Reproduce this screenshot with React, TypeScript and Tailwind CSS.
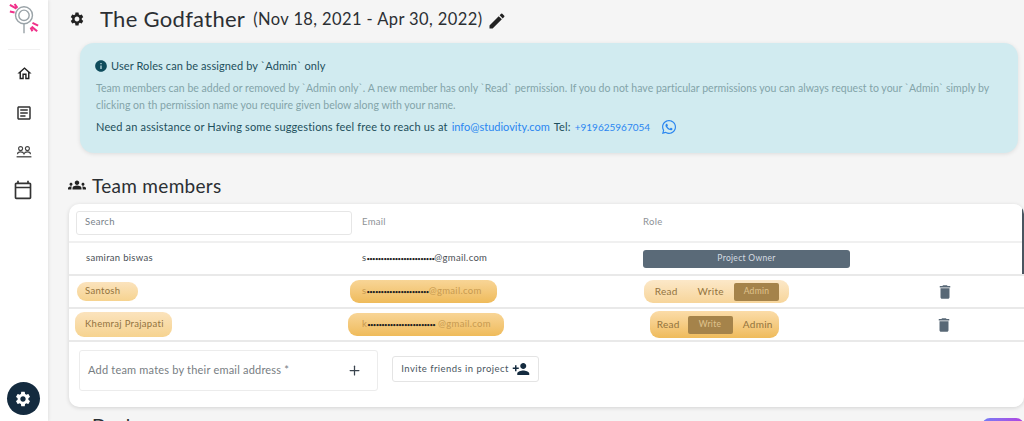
import { Plus } from "lucide-react";
import { MdSettings, MdGroups, MdEdit, MdInfo, MdDelete, MdPersonAdd, MdOutlineHome, MdOutlineArticle, MdOutlineCalendarToday } from "react-icons/md";
import { FaWhatsapp } from "react-icons/fa";

const font = "font-['Lato','Noto_Sans',sans-serif]";

function Logo() {
  return (
    <svg width="34" height="36" viewBox="7 2 34 36" className="block">
      <circle cx="24" cy="15" r="9" fill="none" stroke="#9aa3a8" strokeWidth="1.5" />
      <circle cx="24" cy="15" r="5.5" fill="none" stroke="#9aa3a8" strokeWidth="1.5" />
      <path d="M24 24v10" stroke="#9aa3a8" strokeWidth="1.5" />
      <path d="M9 4l7 4M14 3l3 4M9 11l5 1" stroke="#f0308a" strokeWidth="2.2" />
      <path d="M33 23l6 3M32 27l6 5M31 28l2 4" stroke="#f0308a" strokeWidth="2.2" />
    </svg>
  );
}

function PeopleIcon() {
  return (
    <svg width="16" height="12" viewBox="0 0 16 12" fill="none" stroke="#444" strokeWidth="1.1" className="mt-[24px] block">
      <circle cx="4.6" cy="2.6" r="2" />
      <circle cx="11.4" cy="2.6" r="2" />
      <path d="M1.5 8.2c0-1.6 1.4-2.3 3.1-2.3s3 .7 3.4 1.9c.4-1.2 1.7-1.9 3.4-1.9s3.1.7 3.1 2.3" />
      <path d="M.6 10.8h14.8" strokeWidth="1.3" />
    </svg>
  );
}

function Sidebar() {
  return (
    <aside className="w-[48px] h-[421px] shrink-0 bg-white shadow-[1px_0_3px_rgba(0,0,0,0.08)] flex flex-col items-center relative z-10">
      <div className="mt-[2px] h-[48px] w-[32px] border-b border-[#f1f1f1] flex justify-center">
        <Logo />
      </div>
      <MdOutlineHome size={17} className="mt-[15px] text-[#222]" />
      <MdOutlineArticle size={18} className="mt-[22px] text-[#333]" />
      <PeopleIcon />
      <MdOutlineCalendarToday size={20} className="mt-[22px] mr-[2px] text-[#333]" />
      <div className="mt-auto mb-[6px] mr-[2px] w-[33px] h-[33px] rounded-full bg-[#142b3f] flex items-center justify-center">
        <MdSettings size={18} className="text-white" />
      </div>
    </aside>
  );
}

function InfoBox() {
  return (
    <section className="ml-[32px] mr-[6px] mt-[5px] h-[110px] rounded-[14px] bg-[#d1ebf0] shadow-[0_1px_4px_rgba(0,0,0,0.1)] pl-[14px] pt-[16px]">
      <div className="flex items-center gap-[3px] text-[#1d4f5c] text-[11px] tracking-[0.1px] leading-[14px]">
        <MdInfo size={14} className="text-[#0f4c5c]" />
        <span>User Roles can be assigned by `Admin` only</span>
      </div>
      <p className="ml-[2px] mt-[7px] text-[#83a4a9] text-[10.5px] leading-[17px] tracking-[0.02px] w-[910px]">
        Team members can be added or removed by `Admin only`. A new member has only `Read` permission. If you do not have particular permissions you can always request to your `Admin` simply by clicking on th permission name you require given below along with your name.
      </p>
      <div className="ml-[2px] mt-[5px] flex items-center text-[#1d4f5c] text-[11px] tracking-[0.16px] leading-[16px]">
        <span>Need an assistance or Having some suggestions feel free to reach us at</span>
        <span className="ml-[4px] text-[#2a86f0] tracking-normal">info@studiovity.com</span>
        <span className="ml-[4px]">Tel:</span>
        <span className="ml-[4px] text-[#2a86f0] text-[10px] tracking-normal">+919625967054</span>
        <FaWhatsapp size={16} className="ml-[11px] text-[#2a86f0]" />
      </div>
    </section>
  );
}

function Dots({ n }: { n: number }) {
  return <span className="text-[6px] tracking-[-0.65px] text-[#222]">{"•".repeat(n)}</span>;
}

function RoleOptions({ active, cls }: { active: "Admin" | "Write"; cls: string }) {
  return (
    <div className={`${cls} rounded-[9px] flex items-center text-[10px] tracking-[0.3px] text-[#92733d]`}>
      {(["Read", "Write", "Admin"] as const).map((r) =>
        r === active ? (
          <span key={r} className="h-[18px] w-[45px] mx-[1px] rounded-[2px] bg-[#a5834a] text-[#e0c48e] text-[8.5px] flex items-center justify-center">{r}</span>
        ) : (
          <span key={r} className={r === "Admin" ? "flex-1 text-center pl-[6px]" : "flex-1 text-center"}>{r}</span>
        )
      )}
    </div>
  );
}

function Row({ children, h }: { children: React.ReactNode; h: string }) {
  return <div className={`${h} flex items-center border-b-2 border-[#e9e9e9]`}>{children}</div>;
}

function Members() {
  return (
    <section className="relative ml-[21px] mt-[8px] h-[203px] rounded-[10px] bg-white shadow-[0_1px_4px_rgba(0,0,0,0.14)] overflow-hidden text-[9.5px] tracking-[0.3px]">
      <div className="absolute right-0 top-[2px] w-[2px] h-[68px] bg-[#4a5560]" />
      <Row h="h-[39px] border-[#f0f0f0]">
        <div className="w-[276px] ml-[7px] h-[24px] rounded-[3px] border border-[#e6e6e6] pl-[8px] flex items-center text-[#78828a] shrink-0">Search</div>
        <span className="ml-[10px] w-[281px] text-[#8d9297]">Email</span>
        <span className="text-[#8d9297]">Role</span>
      </Row>
      <Row h="h-[33px]">
        <span className="ml-[17px] w-[276px] text-[#4a4f55] shrink-0">samiran biswas</span>
        <span className="w-[281px] text-[#4a4f55] shrink-0 flex items-center"><span>s</span><Dots n={24} /><span>@gmail.com</span></span>
        <div className="w-[207px] h-[18px] rounded-[3px] bg-[#5a6a78] text-[#d5dce2] text-[8.5px] flex items-center justify-center">Project Owner</div>
      </Row>
      <Row h="h-[33px]">
        <div className="bg-gradient-to-b from-[#fbe3bd] to-[#f6d38f] ml-[8px] w-[61px] h-[19px] rounded-[9px] pl-[8px] flex items-center text-[#92733d] shrink-0">Santosh</div>
        <div className="bg-gradient-to-b from-[#f8d596] to-[#efbb5a] ml-[212px] w-[147px] h-[23px] rounded-[9px] pl-[12px] flex items-center text-[#c79a50] shrink-0">
          <span>s</span><Dots n={22} /><span>@gmail.com</span>
        </div>
        <RoleOptions active="Admin" cls="bg-gradient-to-b from-[#fce8c8] to-[#f7d59a] ml-[147px] w-[145px] h-[23px] pl-0 pr-[9px]" />
        <MdDelete size={18} className="ml-[147px] text-[#586876]" />
      </Row>
      <Row h="h-[33px]">
        <div className="bg-gradient-to-b from-[#fbe3bd] to-[#f6d38f] ml-[6px] w-[97px] h-[25px] rounded-[9px] pl-[10px] flex items-center text-[#92733d] shrink-0">Khemraj Prajapati</div>
        <div className="bg-gradient-to-b from-[#f8d596] to-[#efbb5a] ml-[176px] w-[156px] h-[23px] rounded-[9px] pl-[14px] flex items-center text-[#c79a50] shrink-0">
          <span>k</span><Dots n={24} /><span className="ml-[3px]">@gmail.com</span>
        </div>
        <RoleOptions active="Write" cls="bg-gradient-to-b from-[#fbdca8] to-[#efbb5a] ml-[146px] w-[129px] h-[27px] pl-0 pr-[3px]" />
        <MdDelete size={18} className="ml-[156px] text-[#586876]" />
      </Row>
      <div className="flex items-start pt-[8px]">
        <div className="ml-[10px] w-[299px] h-[41px] rounded-[3px] border border-[#ececec] pl-[8px] pr-[15px] flex items-center justify-between text-[#777d82] text-[11px] tracking-[0.2px]">
          <span>Add team mates by their email address *</span>
          <Plus size={15} className="text-[#3a444e]" />
        </div>
        <div className="ml-[14px] mt-[6px] w-[147px] h-[26px] rounded-[3px] border border-[#e4e4e4] flex items-center justify-center gap-[3px] text-[#4a5560] tracking-[0.45px]">
          <span>Invite friends in project</span>
          <MdPersonAdd size={18} className="text-[#142b3f]" />
        </div>
      </div>
    </section>
  );
}

export default function App() {
  return (
    <div className={`${font} w-[1024px] h-[421px] overflow-hidden flex bg-[#f5f5f5]`}>
      <Sidebar />
      <main className="flex-1 min-w-0 relative">
        <header className="h-[38px] flex items-center pl-[21px] text-[#2b2f33]">
          <MdSettings size={16} className="text-[#222]" />
          <h1 className="ml-[15px] text-[22px] tracking-[0.3px] leading-none">The Godfather</h1>
          <span className="ml-[8px] text-[16.5px] tracking-[0.4px] leading-none">(Nov 18, 2021 - Apr 30, 2022)</span>
          <MdEdit size={20} className="ml-[5px] mt-[3px] text-[#222]" />
        </header>
        <InfoBox />
        <div className="mt-[21px] ml-[20px] h-[22px] flex items-center text-[#2b2f33]">
          <MdGroups size={18} className="text-[#222]" />
          <h2 className="ml-[6px] text-[19px] tracking-[0.3px] leading-none">Team members</h2>
        </div>
        <Members />
        <div className="mt-[9px] ml-[26px] flex items-center text-[#2b2f33] text-[19px] leading-none">
          <MdGroups size={16} className="text-[#222]" />
          <span className="ml-[2px]">Deals</span>
        </div>
        <div className="absolute right-0 top-[418px] w-[42px] h-[10px] rounded-t-[8px] bg-gradient-to-r from-[#6f7cf5] to-[#b03fe0]" />
      </main>
    </div>
  );
}
